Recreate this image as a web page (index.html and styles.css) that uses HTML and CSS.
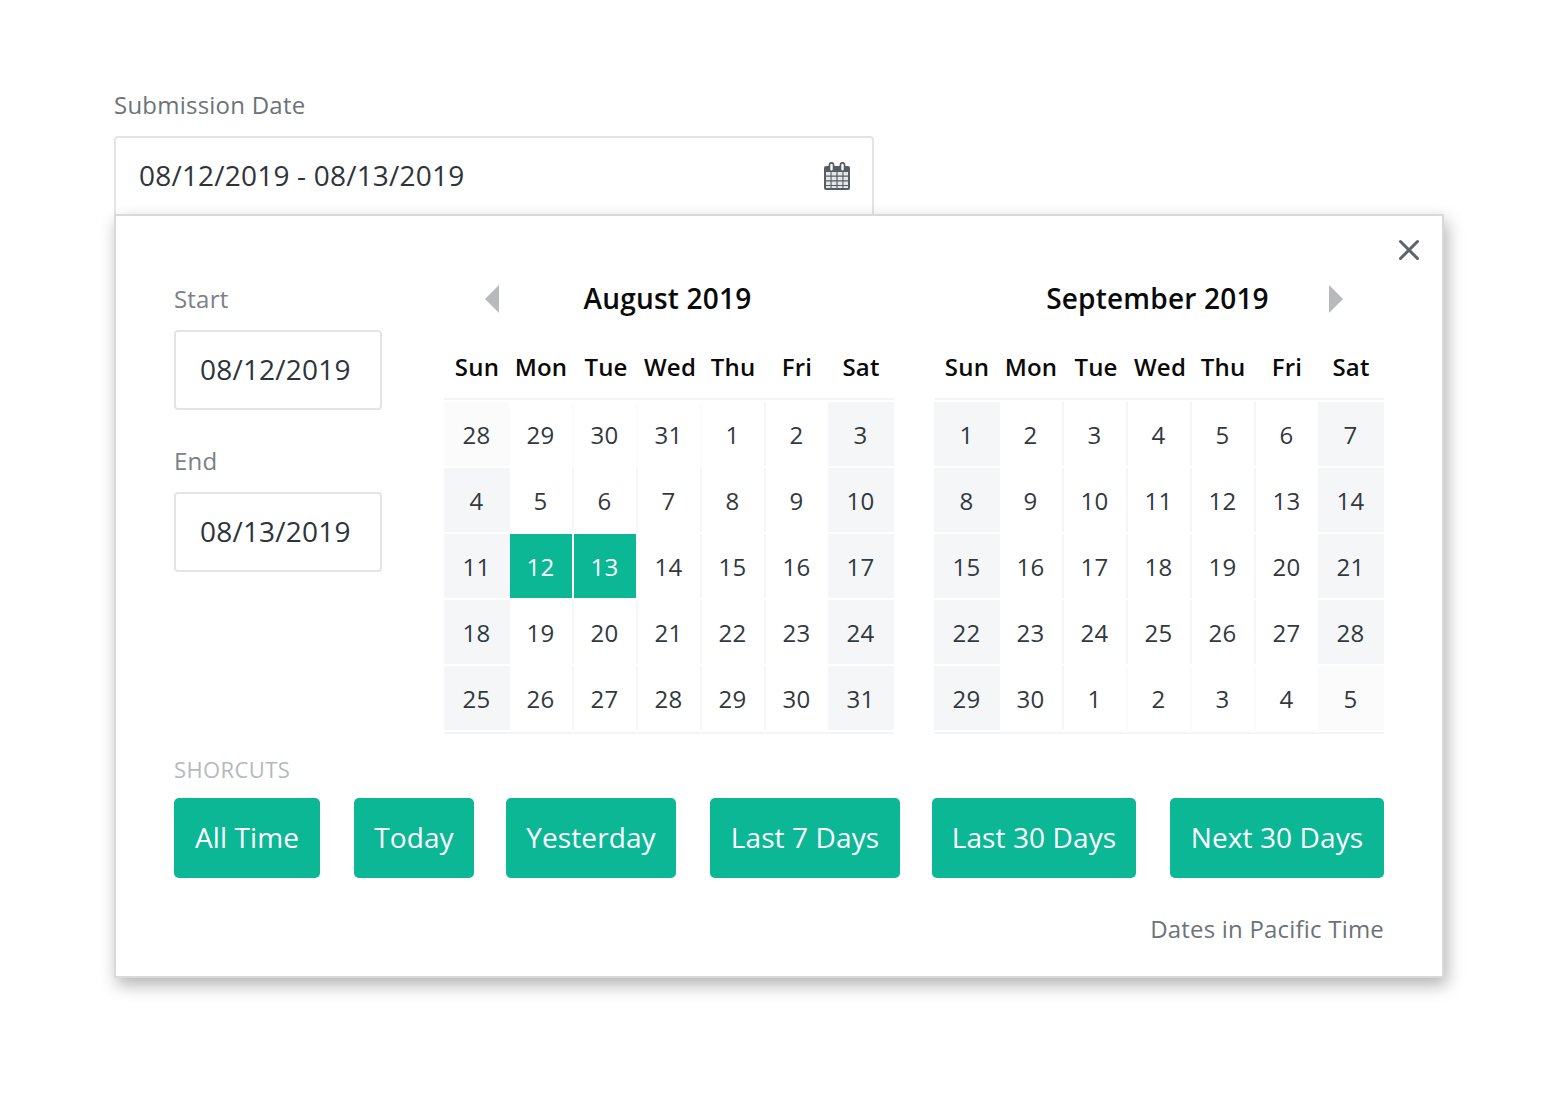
FILE: index.html
```html
<!DOCTYPE html>
<html lang="en">
<head>
<meta charset="utf-8">
<title>Submission Date</title>
<link rel="stylesheet" href="styles.css">
</head>
<body>
<main class="page">
  <div class="field-label">Submission Date</div>
  <div class="range-input">
    <span>08/12/2019 - 08/13/2019</span>
    <svg class="cal-icon" width="26" height="28" viewBox="0 0 26 28" aria-hidden="true">
      <path d="M2 4h2.600V2.800a2.900 2.900 0 0 1 5.800 0V4h5.200V2.800a2.900 2.900 0 0 1 5.800 0V4H24a2 2 0 0 1 2 2v20a2 2 0 0 1-2 2H2a2 2 0 0 1-2-2V6a2 2 0 0 1 2-2z" fill="#565e64"/>
      <path d="M6.300 2.900a1.200 1.200 0 0 1 2.400 0v4.300a1.200 1.200 0 0 1-2.400 0zM17.300 2.900a1.200 1.200 0 0 1 2.400 0v4.300a1.200 1.200 0 0 1-2.400 0z" fill="#fff"/>
      <path d="M2 10h4.500v3.600H2zM7.600 10h4.800v3.600H7.600zM13.600 10h4.800v3.600h-4.800zM19.500 10H24v3.600h-4.500zM2 14.700h4.500v3.600H2zM7.600 14.700h4.800v3.600H7.600zM13.600 14.700h4.800v3.600h-4.800zM19.500 14.700H24v3.600h-4.500zM2 19.400h4.500V23H2zM7.600 19.400h4.800V23H7.600zM13.600 19.400h4.800V23h-4.800zM19.500 19.400H24V23h-4.500zM2 24.100h4.500V26H2zM7.600 24.100h4.800V26H7.600zM13.600 24.100h4.800V26h-4.800zM19.500 24.100H24V26h-4.500z" fill="#e4e6e8"/>
    </svg>
  </div>
  <section class="popup">
    <svg class="close" width="22" height="22" viewBox="0 0 22 22" aria-hidden="true">
      <path d="M2.500 2.500l17 17M19.500 2.500l-17 17" stroke="#5c646a" stroke-width="3" stroke-linecap="round" fill="none"/>
    </svg>
    <div class="top">
      <div class="dates">
        <div class="side-label">Start</div>
        <div class="date-box">08/12/2019</div>
        <div class="side-label second">End</div>
        <div class="date-box">08/13/2019</div>
      </div>
      <div class="months">
        <div class="month">
          <div class="month-head">
            <svg class="arrow arrow-left" width="14" height="28" viewBox="0 0 14 28" aria-hidden="true"><path d="M14 0v28L0 14z"/></svg>
            <h2>August 2019</h2>
            <span></span>
          </div>
          <div class="weekdays"><span>Sun</span><span>Mon</span><span>Tue</span><span>Wed</span><span>Thu</span><span>Fri</span><span>Sat</span></div>
          <div class="days">
            <span class="o">28</span><span class="o">29</span><span class="o">30</span><span class="o">31</span><span>1</span><span>2</span><span class="w">3</span>
            <span class="w">4</span><span>5</span><span>6</span><span>7</span><span>8</span><span>9</span><span class="w">10</span>
            <span class="w">11</span><span class="s">12</span><span class="s">13</span><span>14</span><span>15</span><span>16</span><span class="w">17</span>
            <span class="w">18</span><span>19</span><span>20</span><span>21</span><span>22</span><span>23</span><span class="w">24</span>
            <span class="w">25</span><span>26</span><span>27</span><span>28</span><span>29</span><span>30</span><span class="w">31</span>
          </div>
        </div>
        <div class="month">
          <div class="month-head">
            <span></span>
            <h2>September 2019</h2>
            <svg class="arrow arrow-right" width="14" height="28" viewBox="0 0 14 28" aria-hidden="true"><path d="M0 0v28l14-14z"/></svg>
          </div>
          <div class="weekdays"><span>Sun</span><span>Mon</span><span>Tue</span><span>Wed</span><span>Thu</span><span>Fri</span><span>Sat</span></div>
          <div class="days">
            <span class="w">1</span><span>2</span><span>3</span><span>4</span><span>5</span><span>6</span><span class="w">7</span>
            <span class="w">8</span><span>9</span><span>10</span><span>11</span><span>12</span><span>13</span><span class="w">14</span>
            <span class="w">15</span><span>16</span><span>17</span><span>18</span><span>19</span><span>20</span><span class="w">21</span>
            <span class="w">22</span><span>23</span><span>24</span><span>25</span><span>26</span><span>27</span><span class="w">28</span>
            <span class="w">29</span><span>30</span><span class="o">1</span><span class="o">2</span><span class="o">3</span><span class="o">4</span><span class="o">5</span>
          </div>
        </div>
      </div>
    </div>
    <div class="shortcuts-label">SHORCUTS</div>
    <div class="shortcuts">
      <button>All Time</button>
      <button>Today</button>
      <button>Yesterday</button>
      <button>Last 7 Days</button>
      <button>Last 30 Days</button>
      <button>Next 30 Days</button>
    </div>
    <div class="note">Dates in Pacific Time</div>
  </section>
</main>
</body>
</html>
```
FILE: styles.css
```css
* { box-sizing: border-box; }
html, body { margin: 0; padding: 0; background: #fff; }
body { font-family: "Open Sans", "Liberation Sans", sans-serif; color: #32393e; }
.page { width: 1330px; margin-left: 114px; padding-top: 88px; padding-bottom: 60px; }
.field-label { height: 34px; line-height: 34px; font-size: 24px; letter-spacing: .23px; color: #6c7378; margin-bottom: 14px; }
.range-input { width: 760px; height: 80px; border: 2px solid #e3e4e5; border-radius: 4px 4px 0 0; display: flex; align-items: center; justify-content: space-between; padding: 0 22px 0 23px; font-size: 28px; line-height: 36px; letter-spacing: .2px; color: #2e353a; }
.range-input span { margin-bottom: 2px; }
.cal-icon { display: block; }
.popup { position: relative; width: 1330px; height: 764px; margin-top: -2px; background: #fff; border: 2px solid #d8d9da; padding: 64px 58px 0; box-shadow: 3px 7px 16px rgba(0, 0, 0, .3); }
.close { position: absolute; top: 23px; right: 22px; }
.top { display: flex; }
.dates { width: 270px; flex: none; }
.side-label { height: 38px; line-height: 38px; font-size: 24px; letter-spacing: .2px; color: #7a8186; margin-bottom: 12px; }
.side-label.second { margin-top: 32px; }
.date-box { width: 208px; height: 80px; border: 2px solid #e3e4e5; border-radius: 4px; padding: 0 0 2px 24px; display: flex; align-items: center; font-size: 28px; letter-spacing: .2px; color: #2e353a; }
.months { display: flex; gap: 40px; }
.month { width: 450px; }
.month-head { display: grid; grid-template-columns: 1fr auto 1fr; align-items: center; height: 36px; padding-right: 3px; }
.month-head h2 { margin: 0; font-size: 28px; font-weight: 600; line-height: 34px; letter-spacing: .2px; color: #0a0a0a; }
.arrow { display: block; fill: #b6babd; margin-top: 2px; }
.arrow-left { margin-left: 41px; }
.arrow-right { justify-self: end; margin-right: 38px; }
.weekdays, .days { display: grid; grid-template-columns: 66px 64px 64px 64px 64px 62px 66px; }
.weekdays { height: 84px; padding-top: 32px; border-bottom: 2px solid #f3f4f5; }
.weekdays span { height: 38px; line-height: 38px; text-align: center; font-size: 24px; font-weight: 600; letter-spacing: .2px; color: #0a0a0a; }
.weekdays span:nth-child(2), .weekdays span:nth-child(5) { padding-right: 2px; }
.days { row-gap: 2px; padding: 2px 0; border-bottom: 2px solid #f3f4f5; }
.days span { height: 64px; line-height: 66px; padding-right: 1px; text-align: center; font-size: 24px; letter-spacing: .3px; color: #32393e; background: #fff; }
.days span:nth-child(7n+2), .days span:nth-child(7n+3), .days span:nth-child(7n+4), .days span:nth-child(7n+5) { border-right: 2px solid #f5f6f7; }
.days span.o { background: #fff; border-right-color: #fbfbfb; }
.days span.o:nth-child(7n+1), .days span.o:nth-child(7n) { background: #fbfbfc; }
.days .w { background: #f5f6f8; }
.days span.s { background: #0bb795; color: #fff; border-right-color: #fff; }
.shortcuts-label { margin-top: 20px; height: 30px; line-height: 30px; font-size: 22px; letter-spacing: .4px; color: #b5b9bc; }
.shortcuts { display: grid; grid-template-columns: 146px 122px 170px 192px 204px 216px; column-gap: 32px; margin-top: 14px; }
.shortcuts button { height: 80px; padding: 0 0 2px; border: 0; border-radius: 5px; background: #0bb795; color: #fff; font-family: inherit; font-size: 28px; letter-spacing: .1px; }
.shortcuts button:nth-child(even) { margin-left: 2px; }
.note { margin-top: 33px; height: 36px; line-height: 36px; text-align: right; font-size: 24px; letter-spacing: .2px; color: #6c7378; }
```
